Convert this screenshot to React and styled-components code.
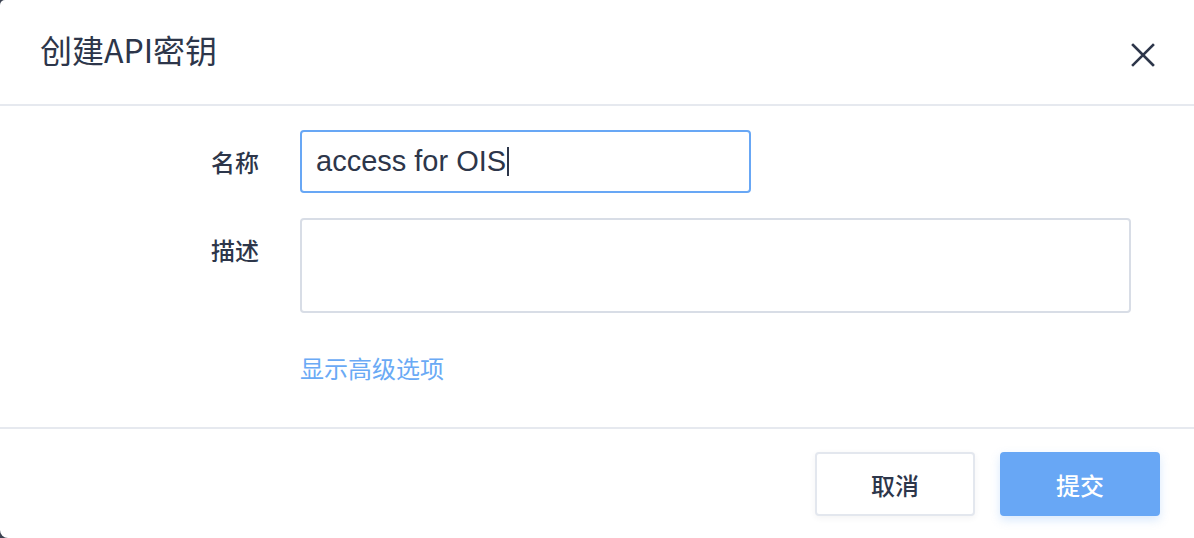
import React from "react";
import styled, { createGlobalStyle } from "styled-components";

const Global = createGlobalStyle`
  html, body { margin: 0; padding: 0; background: #3c4352; }
  body { font-family: "Noto Sans CJK SC", "Noto Sans", sans-serif; }
  * { box-sizing: border-box; }
`;

const Dialog = styled.div`
  width: 1194px;
  height: 538px;
  background: #fff;
  border-radius: 5px 0 0 8px;
  display: flex;
  flex-direction: column;
  color: #2d364a;
  overflow: hidden;
`;

const Header = styled.div`
  height: 106px;
  flex: none;
  display: flex;
  align-items: center;
  justify-content: space-between;
  padding: 0 38px 6px 40px;
  border-bottom: 2px solid #e6e9ef;
`;

const Title = styled.h1`
  margin: 0;
  font-size: 32px;
  font-weight: 400;
  line-height: 44px;
  color: #2d364a;
`;

const CloseBtn = styled.button`
  border: none;
  background: none;
  padding: 0;
  width: 26px;
  height: 26px;
  display: flex;
  align-items: center;
  justify-content: center;
  cursor: pointer;
  margin-top: 12px;
`;

const Body = styled.div`
  flex: 1;
  padding: 24px 63px 0 0;
  display: grid;
  grid-template-columns: 259px 1fr;
  column-gap: 41px;
  row-gap: 25px;
  align-content: start;
`;

const Label = styled.label`
  font-size: 24px;
  font-weight: 500;
  line-height: 63px;
  text-align: right;
  color: #2d364a;
`;

const InputBox = styled.div`
  width: 451px;
  height: 63px;
  border: 2px solid ${(p) => (p.$focused ? "#68a7f5" : "#d8dde6")};
  border-radius: 4px;
  padding: 0 14px;
  display: flex;
  align-items: center;
  font-size: 29px;
  color: #2d364a;
  font-family: "Liberation Sans", Arial, sans-serif;
`;

const Caret = styled.span`
  display: inline-block;
  width: 2px;
  height: 29px;
  background: #2d364a;
  margin-left: 1px;
`;

const TextArea = styled.div`
  height: 95px;
  border: 2px solid #d8dde6;
  border-radius: 4px;
`;

const Spacer = styled.div``;

const Link = styled.a`
  font-size: 24px;
  line-height: 34px;
  color: #6aaaf5;
  margin-top: 13px;
  cursor: pointer;
  justify-self: start;
`;

const Footer = styled.div`
  height: 111px;
  flex: none;
  border-top: 2px solid #e6e9ef;
  display: flex;
  justify-content: flex-end;
  align-items: flex-start;
  gap: 25px;
  padding: 23px 34px 0 0;
`;

const Button = styled.button`
  width: 160px;
  height: 64px;
  border-radius: 4px;
  font-family: "Noto Sans CJK SC", sans-serif;
  font-size: 24px;
  font-weight: 500;
  cursor: pointer;
  border: 2px solid ${(p) => (p.$primary ? "#68a7f5" : "#e3e7ee")};
  background: ${(p) => (p.$primary ? "#68a7f5" : "#fff")};
  color: ${(p) => (p.$primary ? "#fff" : "#2d364a")};
  box-shadow: ${(p) =>
    p.$primary ? "0 4px 10px rgba(104,167,245,0.25)" : "0 2px 6px rgba(45,54,74,0.06)"};
`;

export default function App() {
  return (
    <>
      <Global />
      <Dialog>
        <Header>
          <Title>创建API密钥</Title>
          <CloseBtn aria-label="close">
            <svg width="24" height="24" viewBox="0 0 24 24">
              <path d="M2 2 L22 22 M22 2 L2 22" stroke="#2d364a" strokeWidth="2.6" strokeLinecap="square" />
            </svg>
          </CloseBtn>
        </Header>
        <Body>
          <Label>名称</Label>
          <InputBox $focused>
            access for OIS<Caret />
          </InputBox>
          <Label>描述</Label>
          <TextArea />
          <Spacer />
          <Link>显示高级选项</Link>
        </Body>
        <Footer>
          <Button>取消</Button>
          <Button $primary>提交</Button>
        </Footer>
      </Dialog>
    </>
  );
}
